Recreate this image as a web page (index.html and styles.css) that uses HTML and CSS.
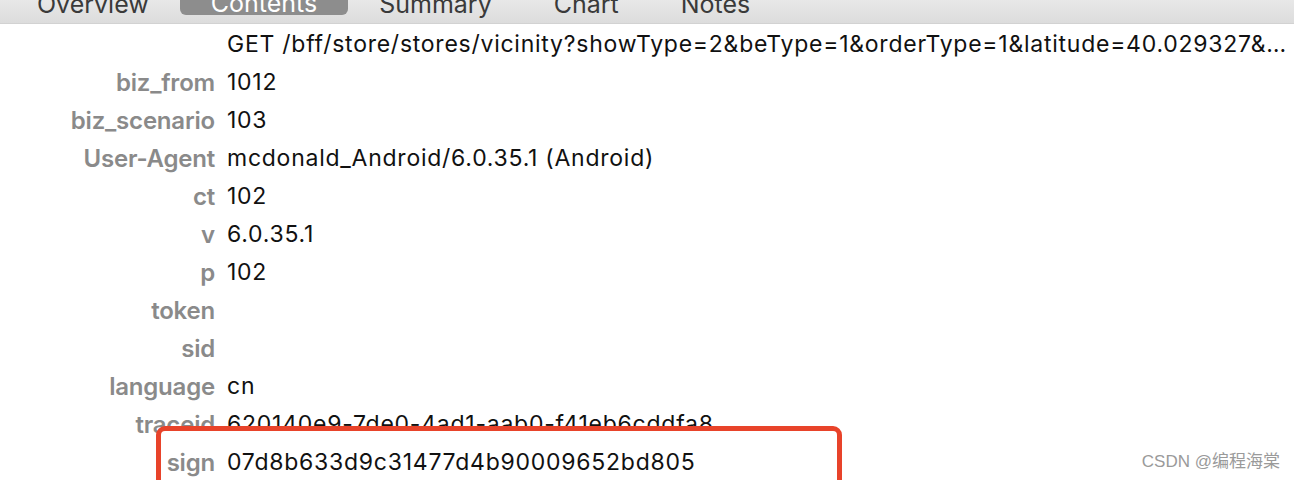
FILE: index.html
```html
<!DOCTYPE html>
<html lang="en">

<head>
  <title>Contents</title>
  <meta charset="utf-8" />
  <link rel="stylesheet" href="styles.css">
</head>

<body>
  <div class="tabBar">
    <div class="tab">Overview</div>
    <div class="tab tabActive">Contents</div>
    <div class="tab">Summary</div>
    <div class="tab">Chart</div>
    <div class="tab">Notes</div>
  </div>
  <div class="headers">
    <div class="row">
      <div class="key"></div>
      <div class="val">GET /bff/store/stores/vicinity?showType=2&amp;beType=1&amp;orderType=1&amp;latitude=40.029327&amp;…</div>
    </div>
    <div class="row"><div class="key">biz_from</div><div class="val">1012</div></div>
    <div class="row"><div class="key">biz_scenario</div><div class="val">103</div></div>
    <div class="row"><div class="key">User-Agent</div><div class="val">mcdonald_Android/6.0.35.1 (Android)</div></div>
    <div class="row"><div class="key">ct</div><div class="val">102</div></div>
    <div class="row"><div class="key">v</div><div class="val">6.0.35.1</div></div>
    <div class="row"><div class="key">p</div><div class="val">102</div></div>
    <div class="row"><div class="key">token</div><div class="val"></div></div>
    <div class="row"><div class="key">sid</div><div class="val"></div></div>
    <div class="row"><div class="key">language</div><div class="val">cn</div></div>
    <div class="row"><div class="key">traceid</div><div class="val">620140e9-7de0-4ad1-aab0-f41eb6cddfa8</div></div>
    <div class="row marked"><div class="key">sign</div><div class="val">07d8b633d9c31477d4b90009652bd805</div></div>
  </div>
  <div class="watermark">CSDN @编程海棠</div>
</body>

</html>
```

FILE: styles.css
```css
html,
body {
  height: 100%;
  margin: 0;
  overflow: hidden;
}

body {
  background: white;
  font-family: Inter, "Liberation Sans", sans-serif;
  position: relative;
}

.tabBar {
  height: 23px;
  display: flex;
  align-items: flex-end;
  padding-left: 37px;
  background: linear-gradient(#e8e8e8, #dcdcdc);
  border-bottom: 1px solid #d2d2d2;
  overflow: hidden;
}

.tab {
  font-size: 25px;
  color: #3a3a3a;
  line-height: 26px;
  padding: 0 31px 6px;
  margin-top: -20px;
}

.tab:first-child {
  padding-left: 0;
}

.tabActive {
  background: #8d8d8d;
  color: white;
  border-radius: 0 0 6px 6px;
  margin-bottom: 8px;
  padding: 0 31px;
  line-height: 24px;
  padding-top: 2px;
}

.headers {
  padding-top: 1px;
}

.row {
  display: flex;
  height: 38px;
  align-items: center;
  font-size: 23px;
  white-space: nowrap;
}

.key {
  width: 215px;
  flex: none;
  text-align: right;
  font-weight: 600;
  font-size: 24px;
  letter-spacing: -0.2px;
  color: #8a8a8a;
}

.val {
  margin-left: 12px;
  color: #111;
  letter-spacing: 0.75px;
  overflow: hidden;
  text-overflow: ellipsis;
  min-width: 0;
}

.marked {
  position: relative;
  z-index: 1;
}

.marked::before {
  content: "";
  position: absolute;
  left: 156px;
  top: -17px;
  width: 676px;
  height: 80px;
  border: 5px solid #e8432a;
  border-radius: 9px;
  background: white;
  z-index: -1;
}

.watermark {
  position: absolute;
  right: 14px;
  bottom: 8px;
  font-family: "Liberation Sans", "Noto Sans CJK SC", sans-serif;
  font-size: 17px;
  color: #9a9a9a;
}
```
